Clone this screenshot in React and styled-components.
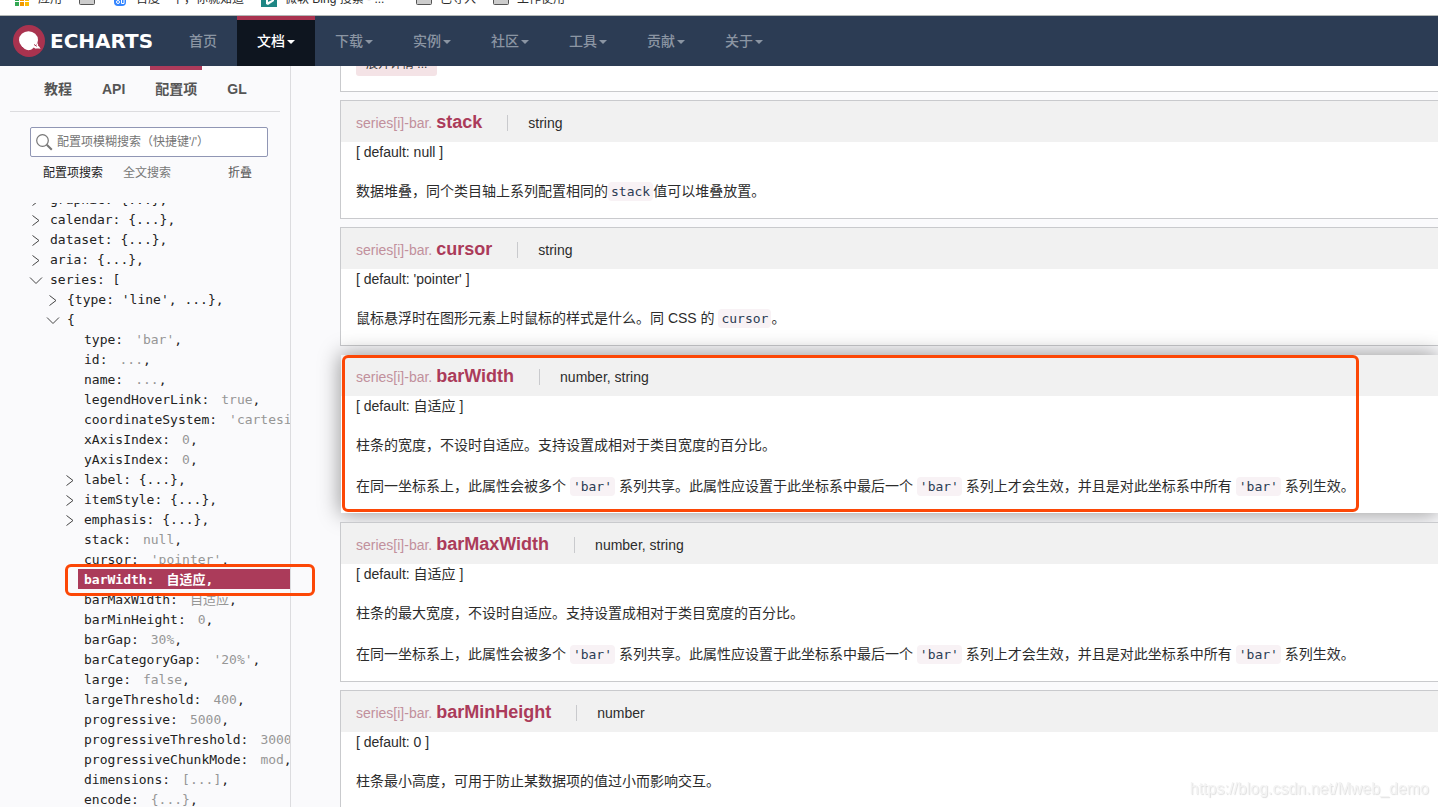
import React from 'react';
import styled, { createGlobalStyle } from 'styled-components'

const GlobalStyle = createGlobalStyle`
  * {
    box-sizing: border-box;
  }
  body {
    margin: 0;
    background: #fafafc;
    color: #2c2c2c;
    font-family: "Liberation Sans", "Noto Sans CJK SC", sans-serif;
    font-size: 14px;
    line-height: 20px;
  }
  a {
    color: inherit;
    text-decoration: none;
  }
  button {
    border: 0;
    padding: 0;
    background: none;
    color: inherit;
    font: inherit;
    cursor: pointer;
  }
`

const Page = styled.div`
  display: flex;
  flex-direction: column;
  height: 100vh;
  overflow: hidden;
`

/* browser bookmarks */
const Bookmarks = styled.div`
  display: flex;
  flex: none;
  align-items: flex-end;
  gap: 17px;
  height: 16px;
  padding: 0 15px 2px;
  overflow: hidden;
  background: #fff;
  border-bottom: 1px solid #b4b8b6;
  white-space: nowrap;
`

const Bookmark = styled.a`
  display: flex;
  flex: none;
  align-items: center;
  gap: 8px;
  width: ${props => props.$width || 'auto'};
  height: 28px;
  font-size: 12px;
`

/* top navigation */
const Nav = styled.nav`
  display: flex;
  flex: none;
  height: 50px;
  background: #2c3c54;
`

const Logo = styled.a`
  display: flex;
  align-items: center;
  gap: 5px;
  width: 156px;
  margin-left: 13px;
  color: #fff;
  font-family: "DejaVu Sans", sans-serif;
  font-size: 20px;
  font-weight: bold;
`

const NavLink = styled.a`
  display: flex;
  align-items: center;
  gap: 2px;
  padding: 0 20px;
  background: ${props => props.$active ? '#0e151f' : 'transparent'};
  box-shadow: ${props => props.$active ? 'inset 0 4px #a9334f' : 'none'};
  color: ${props => props.$active ? '#fff' : '#8b95a3'};
  font-weight: 500;
`

const Caret = styled.span`
  margin-top: 2px;
  border-top: 4px solid;
  border-left: 4px solid transparent;
  border-right: 4px solid transparent;
`

const Columns = styled.div`
  display: flex;
  flex: 1;
  min-height: 0;
`

/* sidebar */
const Sidebar = styled.aside`
  position: relative;
  z-index: 1;
  display: flex;
  flex: none;
  flex-direction: column;
  width: 291px;
  border-right: 1px solid #dcdcdf;
`

const DocTabs = styled.div`
  display: flex;
  flex: none;
  gap: 20px;
  height: 46px;
  margin: 0 10px;
  padding-left: 29px;
  border-bottom: 1px solid #dcdcdf;
`

const DocTab = styled.a`
  padding: 13px 5px 0;
  box-shadow: ${props => props.$active ? 'inset 0 4px #ae3b5b' : 'none'};
  color: #555;
  font-weight: bold;
`

const SearchBox = styled.label`
  display: flex;
  flex: none;
  align-items: center;
  gap: 4px;
  height: 30px;
  margin: 15px 22px 0 30px;
  padding-left: 5px;
  border: 1px solid #9096b4;
  border-radius: 2px;
  background: #fff;
`

const SearchInput = styled.input`
  flex: 1;
  min-width: 0;
  border: 0;
  padding: 0;
  outline: none;
  background: none;
  font: inherit;
  font-size: 12px;
  &::placeholder {
    color: #757575;
    opacity: 1;
  }
`

const SearchModes = styled.div`
  display: flex;
  flex: none;
  gap: 20px;
  height: 46px;
  padding: 6px 38px 0 43px;
  font-size: 12px;
`

const ModeButton = styled.button`
  align-self: flex-start;
  color: ${props => props.$active ? '#222' : '#777'};
  &:last-child {
    margin-left: auto;
    color: #555;
  }
`

const Tree = styled.div`
  flex: 1;
  min-height: 0;
  overflow: hidden;
  font-family: "DejaVu Sans Mono", "Noto Sans CJK SC", monospace;
  font-size: 13px;
`

const TreeList = styled.ul`
  margin: -14px 0 0;
  padding: 0;
  list-style: none;
`

const TreeItem = styled.li`
  display: flex;
  height: 20px;
  padding-left: ${props => 27 + props.$level * 17}px;
  line-height: 22px;
  white-space: pre;
`

const Toggle = styled.button`
  display: flex;
  flex: none;
  align-items: center;
  justify-content: center;
  width: 17px;
  padding-top: 2px;
`

const Spacer = styled.span`
  flex: none;
  width: 17px;
`

const Label = styled.a`
  flex: 1;
  padding-left: 6px;
  background: ${props => props.$active ? '#ab3b5a' : 'transparent'};
  color: ${props => props.$active ? '#fff' : '#222'};
  font-weight: ${props => props.$active ? 'bold' : 'normal'};
`

const Value = styled.span`
  margin-left: 12px;
  color: ${props => props.$active ? '#fff' : '#969696'};
`

/* hand drawn frames over the highlighted option */
const Frame = styled.span`
  position: absolute;
  z-index: 2;
  border: 3px solid #fc4706;
  border-radius: 6px;
  pointer-events: none;
`

const TreeFrame = styled(Frame)`
  width: 250px;
  height: 32px;
  margin: -5px 0 0 4px;
`

const CardFrame = styled(Frame)`
  top: 0;
  bottom: 1px;
  left: 1px;
  width: 1017px;
`

/* option descriptions */
const Main = styled.main`
  display: flex;
  flex: 1;
  flex-direction: column;
  gap: 8px;
  min-width: 0;
  padding-left: 49px;
  overflow: hidden;
`

const Card = styled.section`
  position: relative;
  flex: none;
  border: 1px solid ${props => props.$active ? 'transparent' : '#c9cacd'};
  border-right: 0;
  background: #fff;
  background-clip: padding-box;
  box-shadow: ${props => props.$active ? '0 0 20px rgba(0, 0, 0, 0.4)' : 'none'};
  white-space: nowrap;
`

const CutCard = styled(Card)`
  margin-top: -28px;
  padding: 13px 15px 15px;
`

const MoreButton = styled.button`
  display: block;
  height: 24px;
  padding: 0 10px;
  border-radius: 3px;
  background: #f4e3e6;
  color: #333;
  font-size: 12px;
`

const CardHeader = styled.h4`
  display: flex;
  align-items: baseline;
  height: 41px;
  margin: 0;
  padding: 11px 15px 0;
  background: #f1f1f1;
  font-weight: normal;
`

const Prefix = styled.span`
  color: #c1909c;
`

const Name = styled.a`
  margin-left: 4px;
  color: #ab3b5a;
  font-size: 18px;
  font-weight: bold;
`

const Type = styled.span`
  margin-left: 25px;
  padding-left: 20px;
  border-left: 1px solid #c9cacd;
  line-height: 16px;
`

const CardBody = styled.div`
  padding: 0 15px 17px;
`

const Default = styled.div`
  margin-bottom: 18px;
`

const Text = styled.p`
  height: 21px;
  margin: 0;
  line-height: 23px;
  & + & {
    margin-top: 20px;
  }
`

const Code = styled.code`
  padding: 2px 3px;
  border-radius: 4px;
  background: #f8f2f5;
  color: #2c3c54;
  font-family: "DejaVu Sans Mono", monospace;
  font-size: 13px;
`

const Watermark = styled.div`
  position: fixed;
  right: 9px;
  bottom: 8px;
  z-index: 3;
  color: #f4f4f4;
  font-size: 16px;
  text-shadow: 1px 1px 1px #dedede;
`

const navItems = ['文档', '下载', '实例', '社区', '工具', '贡献', '关于']

const tree = [
  { level: 0, toggle: 'closed', label: 'graphic: {...},' },
  { level: 0, toggle: 'closed', label: 'calendar: {...},' },
  { level: 0, toggle: 'closed', label: 'dataset: {...},' },
  { level: 0, toggle: 'closed', label: 'aria: {...},' },
  { level: 0, toggle: 'open', label: 'series: [' },
  { level: 1, toggle: 'closed', label: "{type: 'line', ...}," },
  { level: 1, toggle: 'open', label: '{' },
  { level: 2, label: 'type:', value: "'bar'" },
  { level: 2, label: 'id:', value: '...' },
  { level: 2, label: 'name:', value: '...' },
  { level: 2, label: 'legendHoverLink:', value: 'true' },
  { level: 2, label: 'coordinateSystem:', value: "'cartesian2d'" },
  { level: 2, label: 'xAxisIndex:', value: '0' },
  { level: 2, label: 'yAxisIndex:', value: '0' },
  { level: 2, toggle: 'closed', label: 'label: {...},' },
  { level: 2, toggle: 'closed', label: 'itemStyle: {...},' },
  { level: 2, toggle: 'closed', label: 'emphasis: {...},' },
  { level: 2, label: 'stack:', value: 'null' },
  { level: 2, label: 'cursor:', value: "'pointer'" },
  { level: 2, label: 'barWidth:', value: '自适应', active: true },
  { level: 2, label: 'barMaxWidth:', value: '自适应' },
  { level: 2, label: 'barMinHeight:', value: '0' },
  { level: 2, label: 'barGap:', value: '30%' },
  { level: 2, label: 'barCategoryGap:', value: "'20%'" },
  { level: 2, label: 'large:', value: 'false' },
  { level: 2, label: 'largeThreshold:', value: '400' },
  { level: 2, label: 'progressive:', value: '5000' },
  { level: 2, label: 'progressiveThreshold:', value: '3000' },
  { level: 2, label: 'progressiveChunkMode:', value: 'mod' },
  { level: 2, label: 'dimensions:', value: '[...]' },
  { level: 2, label: 'encode:', value: '{...}' }
]

const sharedText = (
  <>
    在同一坐标系上，此属性会被多个 <Code>'bar'</Code> 系列共享。此属性应设置于此坐标系中最后一个 <Code>'bar'</Code> 系列上才会生效，并且是对此坐标系中所有 <Code>'bar'</Code> 系列生效。
  </>
)

const options = [
  {
    name: 'stack',
    type: 'string',
    value: 'null',
    texts: [<>数据堆叠，同个类目轴上系列配置相同的<Code>stack</Code>值可以堆叠放置。</>]
  },
  {
    name: 'cursor',
    type: 'string',
    value: "'pointer'",
    texts: [<>鼠标悬浮时在图形元素上时鼠标的样式是什么。同 CSS 的 <Code>cursor</Code>。</>]
  },
  {
    name: 'barWidth',
    type: 'number, string',
    value: '自适应',
    active: true,
    texts: ['柱条的宽度，不设时自适应。支持设置成相对于类目宽度的百分比。', sharedText]
  },
  {
    name: 'barMaxWidth',
    type: 'number, string',
    value: '自适应',
    texts: ['柱条的最大宽度，不设时自适应。支持设置成相对于类目宽度的百分比。', sharedText]
  },
  {
    name: 'barMinHeight',
    type: 'number',
    value: '0',
    texts: ['柱条最小高度，可用于防止某数据项的值过小而影响交互。']
  }
]

const FolderIcon = () => (
  <svg width="16" height="12" viewBox="0 0 16 12">
    <rect x="0.5" y="0.5" width="15" height="11" rx="1" fill="#ccc" stroke="#555" />
  </svg>
)

const AppsIcon = () => (
  <svg width="15" height="14" viewBox="0 0 15 14">
    <path d="M0 0h4v4H0zM0 5h4v4H0zM0 10h4v4H0z" fill="#34a853" />
    <path d="M5 0h4v4H5zM5 5h4v4H5zM5 10h4v4H5z" fill="#f29900" />
    <path d="M10 0h4v4h-4zM10 5h4v4h-4zM10 10h4v4h-4z" fill="#fbbc05" />
  </svg>
)

const BaiduIcon = () => (
  <svg width="16" height="13" viewBox="0 0 16 13">
    <rect x="2" y="0" width="12" height="13" rx="4" fill="#3385ff" />
    <circle cx="6" cy="9" r="1.5" fill="none" stroke="#fff" />
    <path d="M9.5 7v3.5h2.5V7" fill="none" stroke="#fff" />
  </svg>
)

const BingIcon = () => (
  <svg width="16" height="16" viewBox="0 0 16 16">
    <path d="M0 0h16v16H0z" fill="#1f8684" />
    <path d="M5 2l2 1v8l4-2-2-1-1-2 5 2v2l-6 4-2-1z" fill="#fff" />
  </svg>
)

const LogoIcon = () => (
  <svg width="32" height="32" viewBox="0 0 32 32">
    <circle cx="16" cy="16" r="16" fill="#a9334f" />
    <ellipse cx="15.5" cy="15" rx="9.500" ry="8.800" fill="#fff" />
    <path d="M8 19.500c2.200 4 5.500 6.200 9 5.500 2-.4 3.500-2 5-4.500z" fill="#fff" />
    <path d="M20.500 21.500c2.200-.2 3.400-1.500 3.600-3.500 1 .8 1.200 1.800.9 2.700 1.200.6 2.100 1.700 2.500 3.300-1.500-.8-2.700-.6-4-.4-1.500.2-2.600-.6-3-2.100z" fill="#fff" />
    <path d="M21 19.500l2.800 1.800" stroke="#a9334f" />
  </svg>
)

const SearchIcon = () => (
  <svg width="17" height="17" viewBox="0 0 17 17" fill="none" stroke="#777">
    <circle cx="6.500" cy="6.500" r="5.800" strokeWidth="1.200" />
    <path d="M10.800 10.800l5 5" strokeWidth="2" />
  </svg>
)

const Chevron = ({ open }) => (
  <svg width="14" height="12" viewBox="0 0 14 12" fill="none" stroke="#444">
    <path d={open ? 'M1 3.500l6 6 6-6' : 'M3.500 1.500l6.500 5-6.500 5'} />
  </svg>
)

const TreeRow = ({ level, toggle, label, value, active }) => (
  <TreeItem $level={level}>
    {toggle ? <Toggle type="button" aria-label={label}><Chevron open={toggle === 'open'} /></Toggle> : <Spacer />}
    {active ? <TreeFrame /> : null}
    <Label href="#" $active={active}>
      {label}
      {value ? <><Value $active={active}>{value}</Value>,</> : null}
    </Label>
  </TreeItem>
)

const OptionCard = ({ name, type, value, texts, active }) => (
  <Card $active={active}>
    <CardHeader>
      <Prefix>series[i]-bar.</Prefix>
      <Name href="#">{name}</Name>
      <Type>{type}</Type>
    </CardHeader>
    <CardBody>
      <Default>[ default: {value} ]</Default>
      {texts.map((text, i) => <Text key={i}>{text}</Text>)}
    </CardBody>
    {active ? <CardFrame /> : null}
  </Card>
)

export default function App() {
  return (
    <Page>
      <GlobalStyle />
      <Bookmarks>
        <Bookmark href="#"><AppsIcon />应用</Bookmark>
        <Bookmark href="#" aria-label="folder"><FolderIcon /></Bookmark>
        <Bookmark href="#"><BaiduIcon />百度一下，你就知道</Bookmark>
        <Bookmark href="#" $width="138px"><BingIcon />微软 Bing 搜索 - ...</Bookmark>
        <Bookmark href="#"><FolderIcon />已导入</Bookmark>
        <Bookmark href="#"><FolderIcon />工作使用</Bookmark>
      </Bookmarks>
      <Nav>
        <Logo href="#"><LogoIcon />ECHARTS</Logo>
        <NavLink href="#">首页</NavLink>
        {navItems.map(item => (
          <NavLink key={item} href="#" $active={item === '文档'}>{item}<Caret /></NavLink>
        ))}
      </Nav>
      <Columns>
        <Sidebar>
          <DocTabs>
            <DocTab href="#">教程</DocTab>
            <DocTab href="#">API</DocTab>
            <DocTab href="#" $active>配置项</DocTab>
            <DocTab href="#">GL</DocTab>
          </DocTabs>
          <SearchBox>
            <SearchIcon />
            <SearchInput type="text" aria-label="搜索" placeholder="配置项模糊搜索（快捷键'/'）" />
          </SearchBox>
          <SearchModes>
            <ModeButton type="button" $active>配置项搜索</ModeButton>
            <ModeButton type="button">全文搜索</ModeButton>
            <ModeButton type="button">折叠</ModeButton>
          </SearchModes>
          <Tree>
            <TreeList>
              {tree.map(row => <TreeRow key={row.label} {...row} />)}
            </TreeList>
          </Tree>
        </Sidebar>
        <Main>
          <CutCard>
            <MoreButton type="button">展开详情 ...</MoreButton>
          </CutCard>
          {options.map(option => <OptionCard key={option.name} {...option} />)}
        </Main>
      </Columns>
      <Watermark>https://blog.csdn.net/Mweb_demo</Watermark>
    </Page>
  )
}
